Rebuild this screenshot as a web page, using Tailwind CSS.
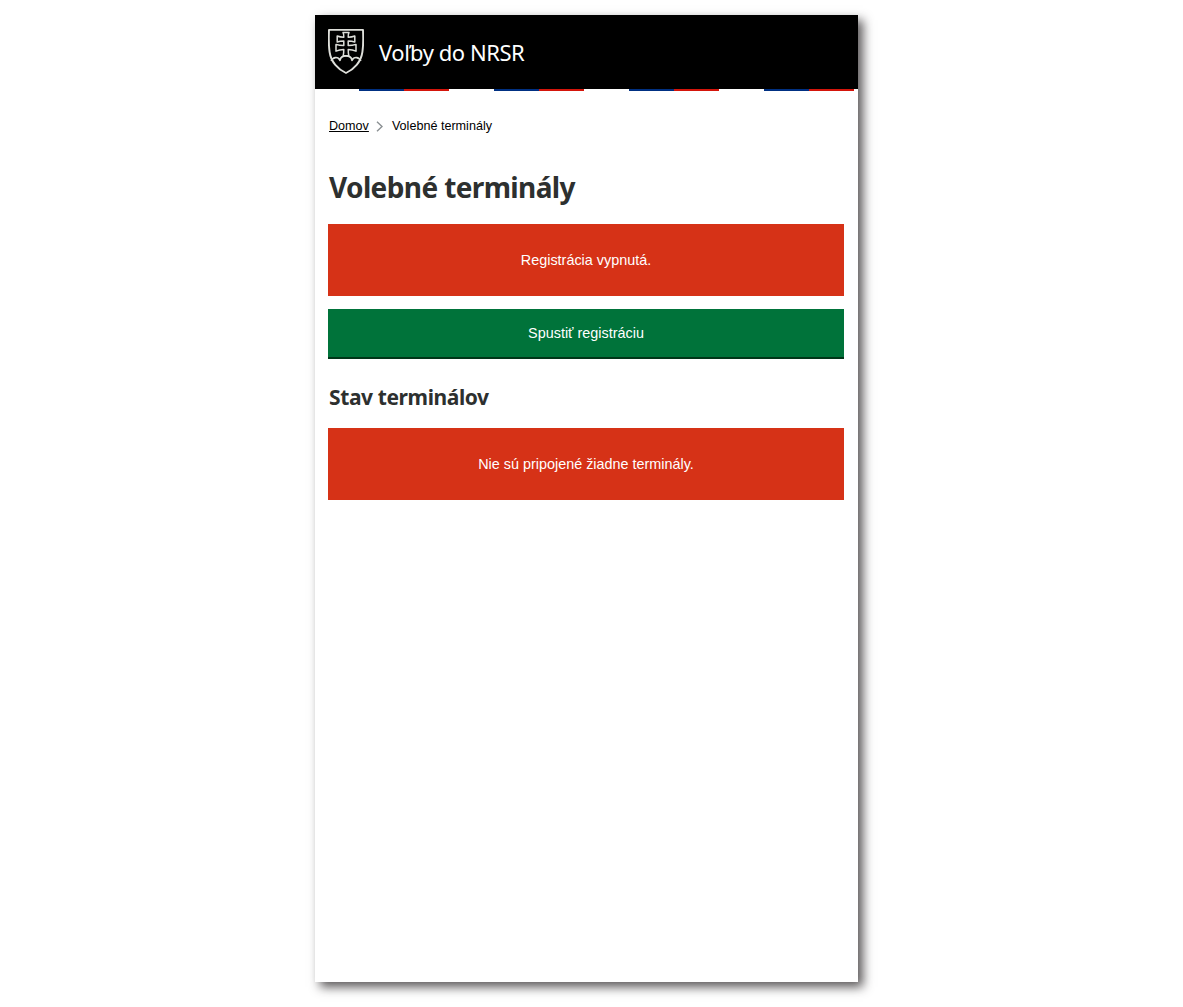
<!DOCTYPE html>
<html lang="sk">
<head>
<meta charset="utf-8">
<title>Voľby do NRSR</title>
<script src="https://cdn.jsdelivr.net/npm/@tailwindcss/browser@4"></script>
</head>
<body class="min-h-screen bg-white pl-[315px] pt-[15px] font-['Liberation_Sans',Arial,sans-serif]">
<div class="h-[967px] w-[543px] bg-white shadow-[5px_5px_10px_#231f20bf]">
  <header class="flex h-[74px] items-center bg-black pl-[13px] text-white">
    <svg class="-mt-[2px] h-[46px] w-9 shrink-0" viewBox="0 0 36 46" fill="none" stroke="#dedfda" stroke-width="1.5" stroke-linejoin="round">
      <path stroke-width="1.9" d="M1 1.900H35C35.300 9 35.500 17 34.400 24C33 34 26 41.500 18 45C10 41.500 3 34 1.600 24C.5 17 .7 9 1 1.900Z"/>
      <path d="M15 4.400H21Q20 6.500 20.200 9.200Q24 9.200 26.800 8V14Q24 13 20.200 13V17.600Q24.500 17.600 28 16.400V23.200Q24.500 21.500 20.200 21.500Q20.200 24.500 20.800 27.800H15.200Q15.800 24.500 15.800 21.500Q11.500 21.500 8 23.200V16.400Q11.500 17.600 15.800 17.600V13Q12 13 9.200 14V8Q12 9.200 15.800 9.200Q16 6.500 15 4.400Z"/>
      <path stroke-width="1.700" d="M3.200 33C5 28.700 10 28.300 12 32.300C13 26.500 23 26.500 24 32.300C26 28.300 31 28.700 32.800 33"/>
    </svg>
    <span class="ml-[15px] whitespace-nowrap font-['Noto_Sans',sans-serif] text-[22px] leading-[30px] tracking-[-0.45px]">Voľby do NRSR</span>
  </header>
  <div class="h-[2px] bg-[repeating-linear-gradient(to_right,#fff_0_44px,#003082_44px_89px,#d4150b_89px_134px,#fff_134px_135px)]"></div>
  <main class="flex flex-col pl-[13px] pr-[14px]">
    <nav class="mt-[26px] flex h-[18px] items-center whitespace-nowrap text-[12.600px] leading-[18px] text-black">
      <a href="#" class="ml-px underline underline-offset-1">Domov</a>
      <svg class="ml-[7px] mt-[1px] h-[11px] w-[7px]" viewBox="0 0 7 11" fill="none" stroke="#8b9093" stroke-width="1.4"><path d="M1 .7L6 5.500L1 10.300"/></svg>
      <span class="ml-[9px]">Volebné terminály</span>
    </nav>
    <h1 class="mt-[32px] h-[40px] whitespace-nowrap pl-px font-['Noto_Sans',sans-serif] text-[28px] font-bold leading-[40px] tracking-[-0.62px] text-[#2d302f]">Volebné terminály</h1>
    <div class="mt-[17px] flex h-[72px] items-center justify-center bg-[#d63217] pt-[2px] text-[14.400px] text-white">Registrácia vypnutá.</div>
    <button class="mt-[13px] h-[50px] border-b-2 border-[#003618] bg-[#00733a] pt-[2px] text-[14.400px] text-white">Spustiť registráciu</button>
    <h2 class="mt-[23px] h-[30px] whitespace-nowrap pl-px font-['Noto_Sans',sans-serif] text-[21px] font-bold leading-[30px] tracking-[-0.4px] text-[#2d302f]">Stav terminálov</h2>
    <div class="mt-[16px] flex h-[72px] items-center justify-center bg-[#d63217] pt-[2px] text-[14.400px] text-white">Nie sú pripojené žiadne terminály.</div>
  </main>
</div>
</body>
</html>
